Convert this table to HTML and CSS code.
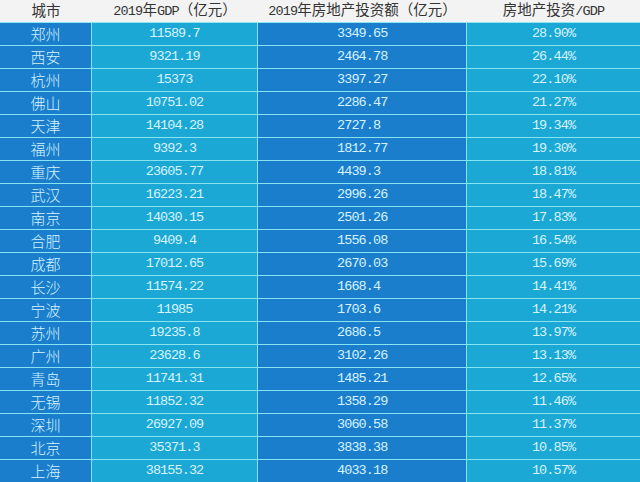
FILE: index.html
```html
<!DOCTYPE html>
<html lang="zh-CN">
<head>
<meta charset="utf-8">
<title>2019年房地产投资</title>
<link rel="stylesheet" href="styles.css">
</head>
<body>
<table class="tbl">
  <colgroup>
    <col class="c1"><col class="c2"><col class="c3"><col class="c4">
  </colgroup>
  <thead>
    <tr>
      <th>城市</th>
      <th><span class="lat">2019</span>年<span class="lat">GDP</span>（亿元）</th>
      <th><span class="lat">2019</span>年房地产投资额（亿元）</th>
      <th>房地产投资<span class="lat">/GDP</span></th>
    </tr>
  </thead>
  <tbody>
    <tr><td class="city">郑州</td><td class="num gdp">11589.7</td><td class="num inv">3349.65</td><td class="num pct">28.90%</td></tr>
    <tr><td class="city">西安</td><td class="num gdp">9321.19</td><td class="num inv">2464.78</td><td class="num pct">26.44%</td></tr>
    <tr><td class="city">杭州</td><td class="num gdp">15373</td><td class="num inv">3397.27</td><td class="num pct">22.10%</td></tr>
    <tr><td class="city">佛山</td><td class="num gdp">10751.02</td><td class="num inv">2286.47</td><td class="num pct">21.27%</td></tr>
    <tr><td class="city">天津</td><td class="num gdp">14104.28</td><td class="num inv">2727.8</td><td class="num pct">19.34%</td></tr>
    <tr><td class="city">福州</td><td class="num gdp">9392.3</td><td class="num inv">1812.77</td><td class="num pct">19.30%</td></tr>
    <tr><td class="city">重庆</td><td class="num gdp">23605.77</td><td class="num inv">4439.3</td><td class="num pct">18.81%</td></tr>
    <tr><td class="city">武汉</td><td class="num gdp">16223.21</td><td class="num inv">2996.26</td><td class="num pct">18.47%</td></tr>
    <tr><td class="city">南京</td><td class="num gdp">14030.15</td><td class="num inv">2501.26</td><td class="num pct">17.83%</td></tr>
    <tr><td class="city">合肥</td><td class="num gdp">9409.4</td><td class="num inv">1556.08</td><td class="num pct">16.54%</td></tr>
    <tr><td class="city">成都</td><td class="num gdp">17012.65</td><td class="num inv">2670.03</td><td class="num pct">15.69%</td></tr>
    <tr><td class="city">长沙</td><td class="num gdp">11574.22</td><td class="num inv">1668.4</td><td class="num pct">14.41%</td></tr>
    <tr><td class="city">宁波</td><td class="num gdp">11985</td><td class="num inv">1703.6</td><td class="num pct">14.21%</td></tr>
    <tr><td class="city">苏州</td><td class="num gdp">19235.8</td><td class="num inv">2686.5</td><td class="num pct">13.97%</td></tr>
    <tr><td class="city">广州</td><td class="num gdp">23628.6</td><td class="num inv">3102.26</td><td class="num pct">13.13%</td></tr>
    <tr><td class="city">青岛</td><td class="num gdp">11741.31</td><td class="num inv">1485.21</td><td class="num pct">12.65%</td></tr>
    <tr><td class="city">无锡</td><td class="num gdp">11852.32</td><td class="num inv">1358.29</td><td class="num pct">11.46%</td></tr>
    <tr><td class="city">深圳</td><td class="num gdp">26927.09</td><td class="num inv">3060.58</td><td class="num pct">11.37%</td></tr>
    <tr><td class="city">北京</td><td class="num gdp">35371.3</td><td class="num inv">3838.38</td><td class="num pct">10.85%</td></tr>
    <tr><td class="city">上海</td><td class="num gdp">38155.32</td><td class="num inv">4033.18</td><td class="num pct">10.57%</td></tr>
  </tbody>
</table>
</body>
</html>
```
FILE: styles.css
```css
html, body {
  margin: 0;
  padding: 0;
  background: #1aa9d3;
}
body {
  width: 640px;
  height: 482px;
  overflow: hidden;
}
.tbl {
  width: 640px;
  border-collapse: separate;
  border-spacing: 0;
  table-layout: fixed;
  font-family: "Noto Sans CJK SC", sans-serif;
}
.c1 { width: 92px; }
.c2 { width: 166px; }
.c3 { width: 209px; }
.c4 { width: 173px; }

.tbl th {
  height: 21px;
  padding: 0;
  background: #f3f3f3;
  color: #333333;
  font-weight: normal;
  font-size: 14.5px;
  line-height: 21px;
  text-align: center;
  white-space: nowrap;
  border-bottom: 1px solid #8fe6f2;
  font-family: "Liberation Serif", "Noto Sans CJK SC", serif;
}
.tbl th .lat {
  font-family: "Liberation Mono", monospace;
  font-size: 13.5px;
  letter-spacing: -0.8px;
}
.tbl td {
  height: 22px;
  padding: 0;
  line-height: 22px;
  color: #d6f3ff;
  border-bottom: 1px solid #86e4f1;
  white-space: nowrap;
  overflow: hidden;
}
.tbl td:nth-child(1),
.tbl td:nth-child(2),
.tbl td:nth-child(3) {
  border-right: 1px solid #86e4f1;
}
.tbl td:nth-child(odd) { background: #1a7ecd; }
.tbl td:nth-child(even) { background: #1ca8d4; }

.city {
  text-align: center;
  font-size: 15px;
  font-weight: 300;
}
.num {
  font-family: "Liberation Mono", monospace;
  font-size: 13.5px;
  letter-spacing: -0.9px;
}
.gdp, .pct { text-align: center; }
.inv {
  text-align: left;
  padding-left: 79px !important;
}
```
